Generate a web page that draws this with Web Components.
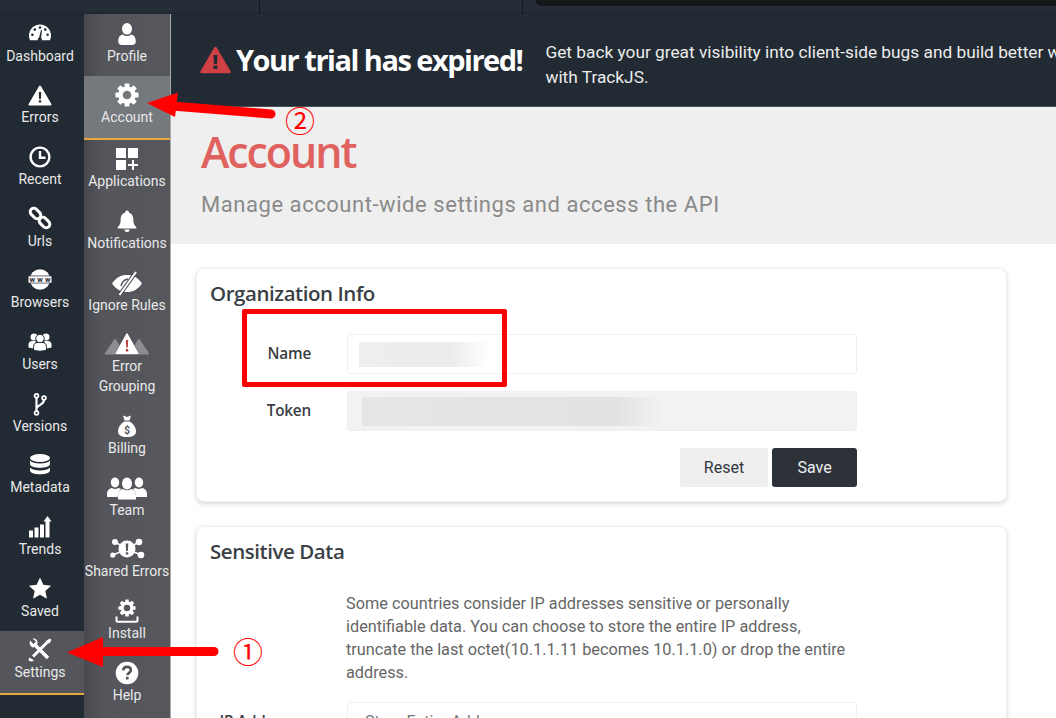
<!DOCTYPE html>
<html lang="en">
<head>
<meta charset="utf-8">
<title>TrackJS Account</title>
<style>
  html, body { margin: 0; height: 718px; overflow: hidden; background: #fff; }
  body { font-family: Roboto, "Liberation Sans", sans-serif; }
</style>
</head>
<body>
<app-shell>
  <side-nav slot="primary" tone="dark">
    <nav-item icon="dashboard" label="Dashboard"></nav-item>
    <nav-item icon="errors" label="Errors"></nav-item>
    <nav-item icon="recent" label="Recent"></nav-item>
    <nav-item icon="urls" label="Urls"></nav-item>
    <nav-item icon="browsers" label="Browsers"></nav-item>
    <nav-item icon="users" label="Users"></nav-item>
    <nav-item icon="versions" label="Versions"></nav-item>
    <nav-item icon="metadata" label="Metadata"></nav-item>
    <nav-item icon="trends" label="Trends"></nav-item>
    <nav-item icon="saved" label="Saved"></nav-item>
    <nav-item icon="settings" label="Settings" active></nav-item>
  </side-nav>
  <side-nav slot="secondary" tone="grey">
    <nav-item icon="profile" label="Profile"></nav-item>
    <nav-item icon="account" label="Account" active></nav-item>
    <nav-item icon="applications" label="Applications"></nav-item>
    <nav-item icon="notifications" label="Notifications"></nav-item>
    <nav-item icon="ignore" label="Ignore Rules"></nav-item>
    <nav-item icon="grouping" label="Error Grouping" tall></nav-item>
    <nav-item icon="billing" label="Billing"></nav-item>
    <nav-item icon="team" label="Team"></nav-item>
    <nav-item icon="shared" label="Shared Errors"></nav-item>
    <nav-item icon="install" label="Install"></nav-item>
    <nav-item icon="help" label="Help"></nav-item>
  </side-nav>

  <trial-banner></trial-banner>
  <page-title heading="Account" sub="Manage account-wide settings and access the API"></page-title>

  <info-card heading="Organization Info">
    <form-row label="Name"><text-field mask="name"></text-field></form-row>
    <form-row label="Token"><text-field mask="token" readonly></text-field></form-row>
    <form-row>
      <div style="display:flex;justify-content:flex-end;gap:4px">
        <action-button>Reset</action-button>
        <action-button primary>Save</action-button>
      </div>
    </form-row>
  </info-card>

  <info-card heading="Sensitive Data">
    <form-row>
      <div style="font-size:16.3px;line-height:23px;color:#666;margin:0 0 1px -1px">Some countries consider IP addresses sensitive or personally identifiable data. You can choose to store the entire IP address, truncate the last octet(10.1.1.11 becomes 10.1.1.0) or drop the entire address.</div>
    </form-row>
    <form-row label="IP Addresses"><text-field value="Store Entire Address"></text-field></form-row>
  </info-card>
</app-shell>
<call-outs></call-outs>

<script>
// every icon is drawn white on a 24px high box, w is the box width
const gear = (cx, cy, s) => {
  let teeth = '';
  for (let a = 0; a < 360; a += 45) {
    teeth += `<rect x="${cx - 2.3 * s}" y="${cy - 11 * s}" width="${4.6 * s}" height="${5 * s}" rx="${0.8 * s}" transform="rotate(${a} ${cx} ${cy})"/>`;
  }
  return `${teeth}<circle cx="${cx}" cy="${cy}" r="${6.2 * s}" fill="none" stroke="#fff" stroke-width="${4.2 * s}"/>`;
};

const ICONS = {
  dashboard: { w: 24, body: `<path d="M12 2.500C5.600 2.500 1 7.500 1 13.500c0 1.800.4 3.300 1 4.800h20c.6-1.500 1-3 1-4.800C23 7.500 18.400 2.500 12 2.500z"/>
    <g fill="var(--bg)"><circle cx="12" cy="5.500" r="1.300"/><circle cx="6.800" cy="7.600" r="1.300"/><circle cx="17.200" cy="7.600" r="1.300"/><circle cx="4.400" cy="12.800" r="1.300"/><circle cx="19.600" cy="12.800" r="1.300"/><path d="M11 15.800 13 8.100l1 .2-.9 7.700a2 2 0 1 1-2.100-.2z"/></g>` },
  errors: { w: 24, body: `<path d="M12 3.500 22.500 21.500H1.500z" stroke="#fff" stroke-width="2" stroke-linejoin="round"/><path d="M10.800 9h2.400l-.3 7h-1.800zM10.800 17.300h2.400v2.200h-2.400z" fill="var(--bg)"/>` },
  recent: { w: 24, body: `<circle cx="12" cy="12" r="9.400" fill="none" stroke="#fff" stroke-width="2.400"/><path d="M12 6v6.800h5.500" fill="none" stroke="#fff" stroke-width="2.400"/>` },
  urls: { w: 24, body: `<g fill="none" stroke="#fff" stroke-width="3"><rect x="-6" y="-3.600" width="12" height="7.200" rx="3.600" transform="translate(7.500 6.500) rotate(45)"/><rect x="-6" y="-3.600" width="12" height="7.200" rx="3.600" transform="translate(16.500 15.500) rotate(45)"/></g>` },
  browsers: { w: 24, body: `<circle cx="12" cy="11.500" r="10.300"/><rect x="0" y="7.600" width="24" height="7.800" fill="var(--bg)"/><rect x=".5" y="8.300" width="23" height="6.400"/><text x="12" y="13.800" text-anchor="middle" font-family="Roboto" font-weight="700" font-size="7.500" fill="var(--bg)" textLength="21">www</text>` },
  users: { w: 24, body: `<circle cx="6" cy="7" r="3.500"/><circle cx="18" cy="7" r="3.500"/><path d="M.5 17.500v-3c0-2 1.500-3.500 3.500-3.500h4l-3 7.500zM23.500 17.500v-3c0-2-1.500-3.500-3.500-3.500h-4l3 7.500z"/><circle cx="12" cy="8.500" r="4.200" stroke="var(--bg)" stroke-width="1"/><path d="M5.500 20v-3.500c0-2.500 2-4 4-4h5c2 0 4 1.500 4 4V20c-3 1.500-10 1.500-13 0z" stroke="var(--bg)" stroke-width="1"/>` },
  versions: { w: 24, body: `<g fill="none" stroke="#fff" stroke-width="1.700"><circle cx="8.500" cy="3.800" r="1.900"/><circle cx="16" cy="6" r="1.900"/><circle cx="8.500" cy="21" r="1.900"/></g><path d="M8.500 5.800v13.300M16 8c0 4.500-6 5-7.300 8" fill="none" stroke="#fff" stroke-width="2.200"/>` },
  metadata: { w: 24, body: `<ellipse cx="12" cy="5" rx="10" ry="4"/><path d="M2 7.500V11c0 2.200 4.500 3.800 10 3.800S22 13.200 22 11V7.500c-1.500 2-5.500 3-10 3S3.500 9.500 2 7.500z"/><path d="M2 14.500v3c0 2.200 4.500 3.800 10 3.800s10-1.600 10-3.800v-3c-1.500 2-5.500 3-10 3s-8.500-1-10-3z"/>` },
  trends: { w: 24, body: `<rect x="1" y="15.500" width="4" height="7"/><rect x="6.500" y="12.500" width="4" height="10"/><rect x="12" y="9.500" width="4" height="13"/><path d="M17.500 22.500V6.500H15.500L19.500 1l4 5.500h-2v16z"/>` },
  saved: { w: 24, body: `<path d="M12 .5 15.300 7.800 23.200 8.700 17.300 14 19 21.800 12 17.800 5 21.800 6.700 14 .8 8.700 8.700 7.800z"/>` },
  settings: { w: 24, body: `<path d="M6 6 20 20" stroke="#fff" stroke-width="3.600"/><path d="M2 2.500 5.500 6 8 3.600 4.500.6C7.500-.4 10.500 2.500 9.400 6L6.200 9.300C2.800 10 .8 6 2 2.500z"/><path d="M19.500 4 5 18.500" stroke="#fff" stroke-width="3"/><path d="M18.200 2.800 22 .6 23.500 2 21.200 5.800zM1.500 19.500 6 22.500 4 23.600 1 23 .6 21z"/>` },
  profile: { w: 24, body: `<ellipse cx="12" cy="6.800" rx="5" ry="5.800"/><path d="M3.200 19.500c0-4 1.800-6.700 4.800-7 1.200 1 2.500 1.500 4 1.500s2.800-.5 4-1.500c3 .3 4.800 3 4.800 7 0 2.200-1.500 3.500-3.500 3.500H6.700c-2 0-3.500-1.300-3.500-3.500z"/>` },
  account: { w: 24, body: gear(12, 12, 1.05) },
  applications: { w: 24, body: `<rect x="1" y="1" width="10" height="10"/><rect x="13" y="1" width="10" height="10"/><rect x="1" y="13" width="10" height="10"/><path d="M18 13v10M13 18h10" stroke="#fff" stroke-width="2"/>` },
  notifications: { w: 24, body: `<circle cx="12" cy="3.500" r="2"/><path d="M12 3.500c4.500 0 6.300 3 6.300 7 0 4 1 5.800 3 7.500v1.500H2.700V18c2-1.700 3-3.500 3-7.500 0-4 1.800-7 6.300-7z"/><path d="M9.500 20.500h5a2.500 2.500 0 0 1-5 0z"/>` },
  ignore: { w: 32, body: `<path d="M1 12.500C5 6.500 10 4 16 4s11 2.500 15 8.500c-4 6-9 8.500-15 8.500S5 18.500 1 12.500z"/><path d="M10 15c1-4 3-6.500 7-7" fill="none" stroke="var(--bg)" stroke-width="1.300"/><path d="M8.500 24 25 1" stroke="var(--bg)" stroke-width="4"/><path d="M8.500 24 25 1" stroke="#fff" stroke-width="2"/>` },
  grouping: { w: 44, body: `<path d="M10 7 20 22H0z" fill="#8b8d91" stroke="#8b8d91" stroke-linejoin="round"/><path d="M34 7 44 22H24z" fill="#8b8d91" stroke="#8b8d91" stroke-linejoin="round"/><path d="M22 1.500 33 22H11z" stroke="var(--bg)" stroke-width="2.500" paint-order="stroke" stroke-linejoin="round"/><path d="M22 2 33 21.500H11z" stroke="#fff" stroke-width="1.500" stroke-linejoin="round"/><path d="M20.800 8h2.400l-.4 7.500h-1.600zM20.800 17h2.400v2.400h-2.400z" fill="#c0403f"/>` },
  billing: { w: 24, body: `<path d="M8 1.500 12 3l4-1.500-1.500 5h-5z"/><path d="M9.300 7.500h5.400c4 2.500 6.300 6.300 6.300 9.500 0 4-3 6-9 6s-9-2-9-6c0-3.200 2.300-7 6.300-9.500z"/><text x="12" y="19.500" text-anchor="middle" font-family="Roboto" font-size="10" font-weight="700" fill="#54565c">$</text>` },
  team: { w: 40, body: `<ellipse cx="8" cy="6.500" rx="4.200" ry="5"/><ellipse cx="32" cy="6.500" rx="4.200" ry="5"/><path d="M0 21v-2.500c0-4 2-6 5-6.500 1.800 1.200 4.500 1.200 6.300 0l3 1c-2 1.500-3.500 4-3.500 8zM40 21v-2.500c0-4-2-6-5-6.500-1.800 1.200-4.500 1.200-6.300 0l-3 1c2 1.500 3.500 4 3.500 8z"/><ellipse cx="20" cy="7.500" rx="5" ry="6"/><path d="M11 23.500v-3.500c0-4.500 2.500-6.500 5-7 2.500 1.700 5.500 1.700 8 0 2.500.5 5 2.500 5 7v3.500z"/>` },
  shared: { w: 34, body: `<path d="M5 5 17 12 29 5M3 18 17 12 31 18" fill="none" stroke="#fff" stroke-width="1.600"/><circle cx="5" cy="5" r="3"/><circle cx="29" cy="5" r="3.300"/><circle cx="2.800" cy="18" r="2.600"/><circle cx="31" cy="18" r="3.300"/><circle cx="17" cy="12" r="8.500"/><path d="M15.700 6.500h2.600l-.4 7.500h-1.800zM15.800 15.200h2.400v2.400h-2.400z" fill="var(--bg)"/>` },
  install: { w: 24, body: `<g transform="translate(0 -1)">${gear(12, 10, 0.78)}</g><path d="M1.500 17.500v3.800c0 .9.600 1.500 1.500 1.500h18c.9 0 1.500-.6 1.500-1.500v-3.800" fill="none" stroke="#fff" stroke-width="2"/>` },
  help: { w: 24, body: `<circle cx="12" cy="12" r="11.300"/><path d="M8.200 9.300c.2-2.200 1.800-3.400 3.900-3.400 2.200 0 3.800 1.300 3.800 3.200 0 2.700-3.500 2.800-3.500 5.200" fill="none" stroke="var(--bg)" stroke-width="2.600"/><rect x="10.900" y="15.800" width="2.700" height="2.700" fill="var(--bg)"/>` }
};

class AppShell extends HTMLElement {
  constructor() {
    super();
    this.attachShadow({ mode: 'open' }).innerHTML = `
      <style>
        :host { display: block; height: 718px; overflow: hidden; background: #222a33; }
        .strip { height: 14px; display: flex; background: #252d37; box-shadow: inset 0 -3px 3px -2px #1e252d; }
        .strip i { display: block; box-sizing: border-box; height: 14px; border-right: 1px solid #14191e; }
        .strip .a { width: 260px; }
        .strip .b { width: 263px; }
        .strip .c { flex: 1; height: 6px; margin-left: 13px; background: #14181b; border-radius: 0 0 0 5px; border: 0; }
        .body { display: flex; height: 704px; }
        main { flex: 1; min-width: 0; background: #fff; overflow: hidden; }
      </style>
      <div class="strip"><i class="a"></i><i class="b"></i><i class="c"></i></div>
      <div class="body">
        <slot name="primary"></slot>
        <slot name="secondary"></slot>
        <main><slot></slot></main>
      </div>`;
  }
}

class SideNav extends HTMLElement {
  constructor() {
    super();
    const grey = this.getAttribute('tone') === 'grey';
    this.attachShadow({ mode: 'open' }).innerHTML = `
      <style>
        :host {
          display: flex; flex-direction: column; flex: none; box-sizing: border-box;
          padding-top: ${grey ? '.8px' : '.5px'}; height: 704px; overflow: hidden;
          width: ${grey ? '87px' : '84px'};
          --bg: ${grey ? '#54565c' : '#222a33'};
          --inset: ${grey ? '0px' : '4px'};
          background: ${grey ? 'linear-gradient(90deg,#47494f,#54565b 22%,#55575c)' : '#222a33'};
          ${grey ? 'border-right: 1px solid #a9aaac;' : ''}
        }
      </style>
      <slot></slot>`;
  }
}

class NavItem extends HTMLElement {
  constructor() {
    super();
    const icon = ICONS[this.getAttribute('icon')];
    const active = this.hasAttribute('active');
    const tall = this.hasAttribute('tall');
    const label = this.getAttribute('label').replace(' Grouping', '<br>Grouping');
    this.attachShadow({ mode: 'open' }).innerHTML = `
      <style>
        :host {
          display: flex; flex-direction: column; align-items: center; flex: none; box-sizing: border-box;
          height: ${active ? 63.7 : tall ? 81.7 : 61.7}px; padding: 7px var(--inset) 0 0;
          color: #e9e9ea; font: 14px/20px Roboto, sans-serif; text-align: center; white-space: nowrap;
        }
        :host([active]) { border-bottom: 2px solid #e3ab3f; }
        svg { display: block; flex: none; fill: #fff; overflow: visible; }
      </style>
      <svg width="${icon.w}" height="24" viewBox="0 0 ${icon.w} 24">${icon.body}</svg>
      <span>${label}</span>`;
    if (active) {
      const dark = this.getAttribute('icon') === 'settings';
      this.style.background = dark ? '#54565c' : '#75787d';
      this.style.setProperty('--bg', dark ? '#54565c' : '#75787d');
    }
  }
}

class TrialBanner extends HTMLElement {
  constructor() {
    super();
    this.attachShadow({ mode: 'open' }).innerHTML = `
      <style>
        :host {
          display: flex; align-items: center; box-sizing: border-box; height: 93px;
          padding: 0 0 0 29px; background: #222a33; border-bottom: 1px solid #4a5058;
          color: #fff; white-space: nowrap; overflow: hidden;
        }
        svg { flex: none; margin-right: 5px; }
        h2 { margin: 0 23px 0 0; font: 700 29px/36px "Open Sans", sans-serif; letter-spacing: -1.5px; }
        p { margin: 10px 0 0; font: 17.3px/25px Roboto, sans-serif; color: #ececec; }
      </style>
      <svg width="31" height="28" viewBox="0 0 31 28"><path d="M15.500 2 29.500 26H1.500z" fill="#cf4044" stroke="#cf4044" stroke-width="2.500" stroke-linejoin="round"/><path d="M13.500 9h4l-.5 9h-3zM13.500 19.500h4V23h-4z" fill="#222a33"/></svg>
      <h2>Your trial has expired!</h2>
      <p>Get back your great visibility into client-side bugs and build better web apps<br>with TrackJS.</p>`;
  }
}

class PageTitle extends HTMLElement {
  constructor() {
    super();
    this.attachShadow({ mode: 'open' }).innerHTML = `
      <style>
        :host { display: block; box-sizing: border-box; height: 137px; padding: 16px 0 0 30px; background: #efefef; }
        h1 { margin: 0; font: 600 43px/58px "Open Sans", sans-serif; color: #e0625e; letter-spacing: -2.100px; }
        p { margin: 9px 0 0; font: 22px/30px Roboto, sans-serif; color: #8a8a8a; letter-spacing: .55px; }
      </style>
      <h1>${this.getAttribute('heading')}</h1>
      <p>${this.getAttribute('sub')}</p>`;
  }
}

class InfoCard extends HTMLElement {
  constructor() {
    super();
    this.attachShadow({ mode: 'open' }).innerHTML = `
      <style>
        :host {
          display: block; box-sizing: border-box; width: 811px; margin: 24px 0 0 25px;
          padding: 11px 0 14px 13px; background: #fff; border: 1px solid #f1f1f1; border-radius: 8px;
          box-shadow: 0 2px 5px rgba(0,0,0,.16);
        }
        h3 { margin: 0 0 28px; font: 600 20.500px/26px "Open Sans", sans-serif; color: #3a3f46; letter-spacing: -.45px; }
      </style>
      <h3>${this.getAttribute('heading')}</h3>
      <slot></slot>`;
  }
}

class FormRow extends HTMLElement {
  constructor() {
    super();
    const label = this.getAttribute('label') || '';
    this.attachShadow({ mode: 'open' }).innerHTML = `
      <style>
        :host { display: grid; grid-template-columns: 101px 510px; column-gap: 36px; align-items: center; margin-bottom: 17px; }
        :host(:last-child) { margin-bottom: 0; }
        label { text-align: right; margin-top: -2px; font: 600 15.300px/20px "Open Sans", sans-serif; color: #3a3f46; letter-spacing: -.2px; white-space: nowrap; }
      </style>
      <label>${label}</label>
      <div><slot></slot></div>`;
  }
}

class TextField extends HTMLElement {
  constructor() {
    super();
    const mask = this.getAttribute('mask');
    const masks = {
      name: 'width:131px;height:25px;margin-left:11px;background:linear-gradient(90deg,#eeeeee,#ececec 70%,#fff)',
      token: 'width:298px;height:29px;margin-left:14px;background:linear-gradient(90deg,#e6e6e6,#e2e2e2 85%,#f1f1f1)'
    };
    this.attachShadow({ mode: 'open' }).innerHTML = `
      <style>
        :host {
          display: flex; align-items: center; box-sizing: border-box; height: 40px;
          border: 1px solid #f0f0f0; border-radius: 3px; background: #fff;
          font: 16px/38px Roboto, sans-serif; color: #777;
        }
        :host([readonly]) { background: #f2f2f2; }
        span { padding-left: 17px; white-space: nowrap; }
      </style>
      ${mask ? `<div style="${masks[mask]}"></div>` : `<span>${this.getAttribute('value') || ''}</span>`}`;
  }
}

class ActionButton extends HTMLElement {
  constructor() {
    super();
    this.attachShadow({ mode: 'open' }).innerHTML = `
      <style>
        :host {
          display: flex; align-items: center; justify-content: center; box-sizing: border-box;
          width: 88px; height: 39px; border-radius: 3px; background: #efefef; color: #33383f;
          font: 16px Roboto, sans-serif;
        }
        :host([primary]) { width: 85px; background: #2d3239; color: #eef0f2; }
      </style>
      <slot></slot>`;
  }
}

// red markup drawn on top of the screenshot
class CallOuts extends HTMLElement {
  constructor() {
    super();
    this.attachShadow({ mode: 'open' }).innerHTML = `
      <style>
        :host { position: absolute; left: 0; top: 0; width: 1056px; height: 718px; pointer-events: none; }
        svg { position: absolute; left: 0; top: 0; }
        span { position: absolute; color: #f00; font: 30px/30px "Noto Sans CJK JP", sans-serif; }
        div { position: absolute; left: 242px; top: 309px; width: 265px; height: 78px; box-sizing: border-box; border: 5px solid #f00; border-radius: 2px; }
      </style>
      <svg width="1056" height="718" viewBox="0 0 1056 718">
        <path d="M67 652.500 103 637v30z" fill="#f00"/>
        <path d="M100 651.500H214" stroke="#f00" stroke-width="9" stroke-linecap="round"/>
        <path d="M147 103 178 92.500 175 117z" fill="#f00"/>
        <path d="M172 106 271 114" stroke="#f00" stroke-width="9" stroke-linecap="round"/>
      </svg>
      <div></div>
      <span style="left:233px;top:635px">①</span>
      <span style="left:285px;top:104px">②</span>`;
  }
}

customElements.define('app-shell', AppShell);
customElements.define('side-nav', SideNav);
customElements.define('nav-item', NavItem);
customElements.define('trial-banner', TrialBanner);
customElements.define('page-title', PageTitle);
customElements.define('info-card', InfoCard);
customElements.define('form-row', FormRow);
customElements.define('text-field', TextField);
customElements.define('action-button', ActionButton);
customElements.define('call-outs', CallOuts);
</script>
</body>
</html>
